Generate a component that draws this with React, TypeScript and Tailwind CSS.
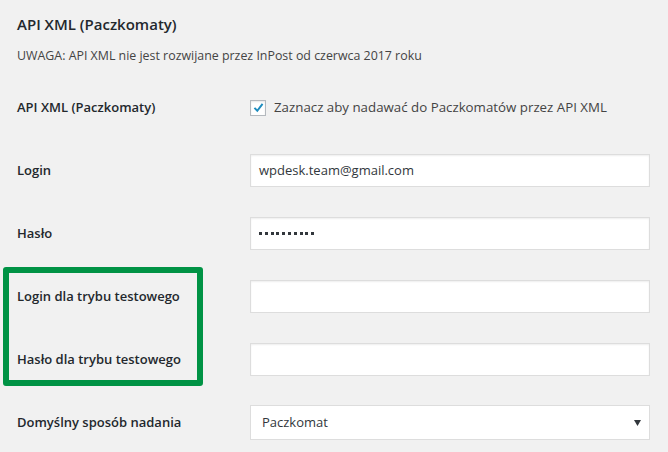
import React from 'react'

const font = { fontFamily: '"Open Sans", "Noto Sans", sans-serif' }

function Row({ label, children }: { label: string; children: React.ReactNode }) {
    return (
        <div className="flex items-center h-[63px]">
            <div className="w-[233px] text-[13px] font-semibold text-[#23282d]">{label}</div>
            <div className="flex items-center">{children}</div>
        </div>
    )
}

function TextBox({ children }: { children?: React.ReactNode }) {
    return (
        <div className="w-[400px] h-[33px] bg-white border border-[#dddddd] shadow-[inset_0_1px_2px_rgba(0,0,0,0.07)] flex items-center px-[8px] text-[13px] text-[#32373c]">
            {children}
        </div>
    )
}

export default function App() {
    return (
        <div className="relative min-h-screen bg-[#f1f1f1] pl-[17px]" style={font}>
            {/* Heading */}
            <div className="h-[48px] flex items-center">
                <h2 className="text-[15px] font-semibold text-[#23282d]">API XML (Paczkomaty)</h2>
            </div>
            <p className="h-[16px] flex items-center text-[12.4px] text-[#444444]">
                UWAGA: API XML nie jest rozwijane przez InPost od czerwca 2017 roku
            </p>

            {/* Settings rows */}
            <div className="mt-[12px]">
                <Row label="API XML (Paczkomaty)">
                    <div className="flex items-center gap-[8px]">
                        <span className="w-[16px] h-[16px] bg-white border border-[#b4b9be] shadow-[inset_0_1px_2px_rgba(0,0,0,0.1)] flex items-center justify-center">
                            <svg width="13" height="13" viewBox="0 0 16 16">
                                <path d="M3 8.5 L6.5 12 L13 3.5" fill="none" stroke="#1e8cbe" strokeWidth="2.4" />
                            </svg>
                        </span>
                        <span className="text-[13.3px] text-[#444444]">Zaznacz aby nadawać do Paczkomatów przez API XML</span>
                    </div>
                </Row>
                <Row label="Login">
                    <TextBox>wpdesk.team@gmail.com</TextBox>
                </Row>
                <Row label="Hasło">
                    <TextBox>
                        <div className="flex gap-[2.8px]">
                            {Array.from({ length: 10 }).map((_, i) => (
                                <span key={i} className="w-[3px] h-[3px] bg-[#32373c]" />
                            ))}
                        </div>
                    </TextBox>
                </Row>
                <Row label="Login dla trybu testowego">
                    <TextBox />
                </Row>
                <Row label="Hasło dla trybu testowego">
                    <TextBox />
                </Row>
                <Row label="Domyślny sposób nadania">
                    <div className="w-[400px] h-[35px] bg-white border border-[#dddddd] flex items-center justify-between pl-[11px] pr-[8px] text-[13px] text-[#32373c]">
                        <span>Paczkomat</span>
                        <svg width="7" height="6" viewBox="0 0 7 6">
                            <path d="M0 0 H7 L3.5 6 Z" fill="#32373c" />
                        </svg>
                    </div>
                </Row>
            </div>

            {/* Highlight annotation */}
            <div className="absolute left-[3px] top-[267px] w-[200px] h-[119px] border-[6px] border-[#009345] rounded-[3px]" />
        </div>
    )
}
